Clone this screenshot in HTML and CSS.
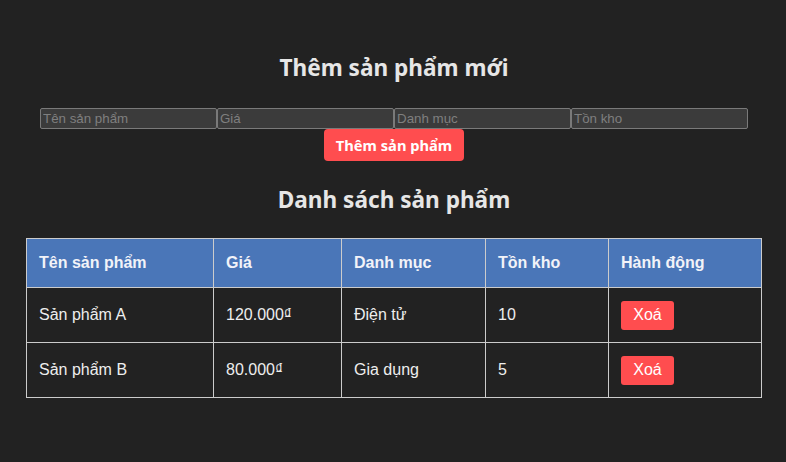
FILE: index.html
```html
<!DOCTYPE html>
<html lang="vi">
<head>
<meta charset="utf-8">
<title>Quản lý sản phẩm</title>
<link rel="stylesheet" href="styles.css">
</head>
<body>
<div class="container">
  <h2 class="title title-first">Thêm sản phẩm mới</h2>
  <form class="form">
    <input class="field" type="text" placeholder="Tên sản phẩm">
    <input class="field" type="text" placeholder="Giá">
    <input class="field" type="text" placeholder="Danh mục">
    <input class="field" type="text" placeholder="Tồn kho">
    <button class="add-btn" type="button">Thêm sản phẩm</button>
  </form>
  <h2 class="title title-second">Danh sách sản phẩm</h2>
  <table class="table">
    <thead>
      <tr>
        <th class="c1">Tên sản phẩm</th>
        <th class="c2">Giá</th>
        <th class="c3">Danh mục</th>
        <th class="c4">Tồn kho</th>
        <th class="c5">Hành động</th>
      </tr>
    </thead>
    <tbody>
      <tr>
        <td>Sản phẩm A</td>
        <td>120.000₫</td>
        <td>Điện tử</td>
        <td>10</td>
        <td><button class="del-btn" type="button">Xoá</button></td>
      </tr>
      <tr>
        <td>Sản phẩm B</td>
        <td>80.000₫</td>
        <td>Gia dụng</td>
        <td>5</td>
        <td><button class="del-btn" type="button">Xoá</button></td>
      </tr>
    </tbody>
  </table>
</div>
</body>
</html>
```
FILE: styles.css
```css
html, body {
  margin: 0;
  padding: 0;
  background: #222222;
  color: #eeeeee;
  font-family: "Liberation Sans", Arial, sans-serif;
}

.container {
  width: 736px;
  margin: 0 auto;
  padding-top: 53px;
  transform: translateX(1px);
}

.title {
  margin: 0;
  text-align: center;
  font-family: "Noto Sans", "Open Sans", sans-serif;
  font-weight: 700;
  font-size: 22.6px;
  line-height: 30px;
  color: #e6e6e6;
}

.title-second {
  margin-top: 24px;
  margin-bottom: 23px;
}

.form {
  display: flex;
  flex-wrap: wrap;
  justify-content: center;
  margin-top: 25px;
}

.field {
  box-sizing: border-box;
  width: 177px;
  height: 21px;
  margin: 0;
  padding: 1px 2px;
  background: #3b3b3b;
  border: 1px solid #7a7a7a;
  border-radius: 2px;
  color: #ddd;
  font-family: "Liberation Sans", Arial, sans-serif;
  font-size: 13.333px;
}

.field::placeholder {
  color: #7f7f7f;
}

.add-btn {
  box-sizing: border-box;
  width: 140px;
  height: 32px;
  margin: 0;
  border: none;
  border-radius: 4px;
  background: #ff4d4f;
  color: #ffffff;
  font-family: "Noto Sans", "Open Sans", sans-serif;
  font-weight: 700;
  font-size: 14.7px;
}

.table {
  width: 736px;
  border-collapse: collapse;
  font-size: 16px;
}

.table th,
.table td {
  border: 1px solid #cccccc;
  padding: 0 12px;
  text-align: left;
}

.table th {
  background: #4a76b8;
  color: #f2f3f8;
  font-weight: 700;
  height: 48px;
}

.table td {
  height: 54px;
  color: #eeeeee;
}

.c1 { width: 162px; }
.c2 { width: 103px; }
.c3 { width: 119px; }
.c4 { width: 98px; }

.del-btn {
  box-sizing: border-box;
  width: 53px;
  height: 29px;
  padding: 0;
  border: none;
  border-radius: 3px;
  background: #ff4d4f;
  color: #ffffff;
  font-family: "Liberation Sans", Arial, sans-serif;
  font-size: 16px;
}
```
